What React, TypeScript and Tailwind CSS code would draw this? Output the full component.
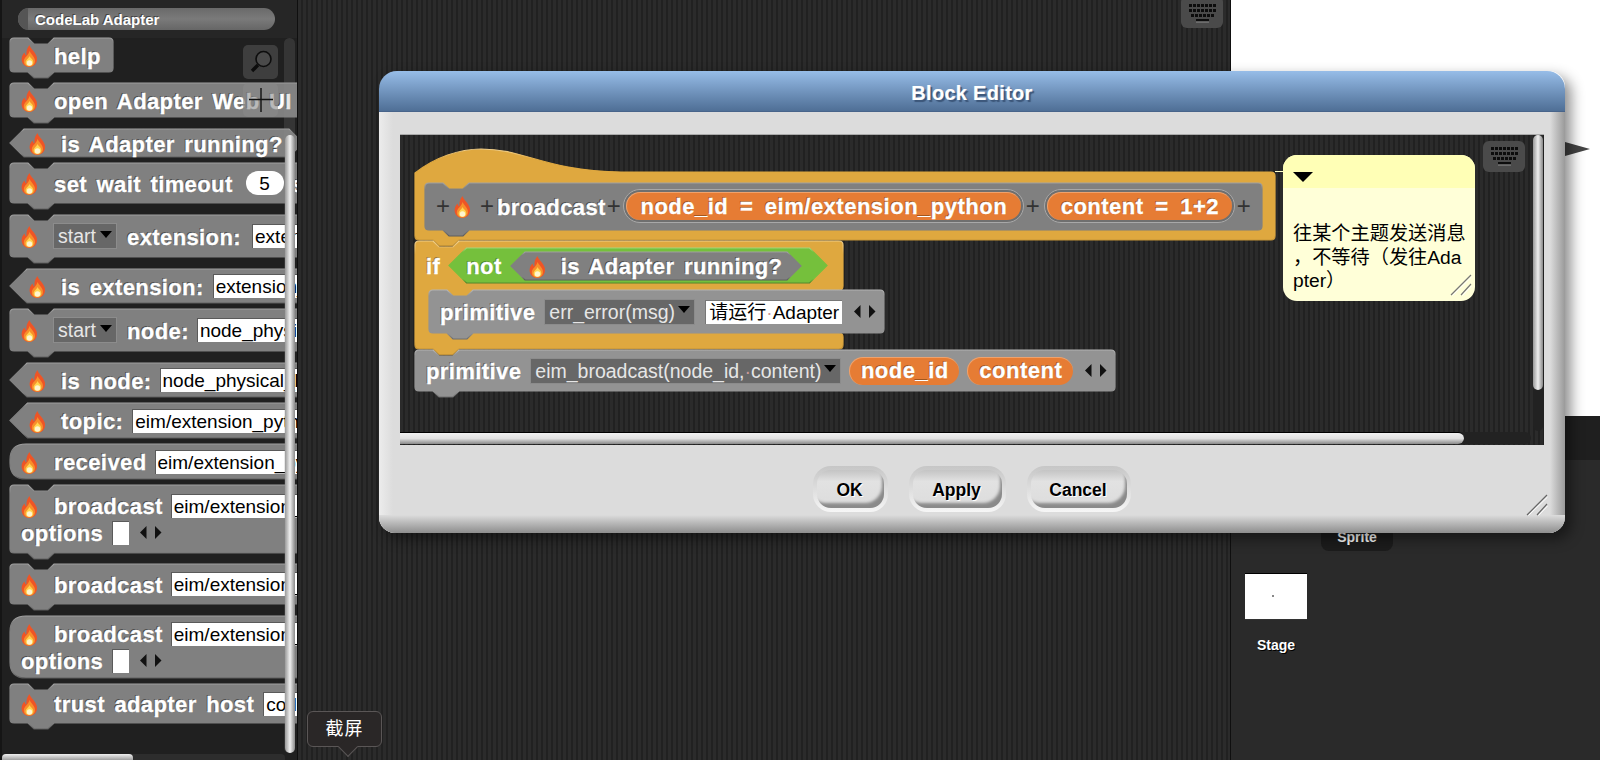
import React, { useId, useLayoutEffect, useRef, useState } from "react";

const LBL =
  "pt-[3px] font-bold text-white text-[22px] tracking-[0.4px] [word-spacing:3px] leading-none whitespace-nowrap [-webkit-text-stroke:0.3px_#fff] [text-shadow:-1px_-1px_0_#4a4a4a]";

type Kind = "cmd" | "pred" | "rep" | "hat" | "proto" | "cshape";

function shape(kind: Kind, w: number, h: number) {
  const r = 4;
  const top = `L18,0 L24,6 L38,6 L44,0 L${w - r},0 Q${w},0 ${w},${r}`;
  const bottom = `L${w},${h - r} Q${w},${h} ${w - r},${h} L44,${h} L38,${h + 6} L24,${h + 6} L18,${h} L${r},${h} Q0,${h} 0,${h - r} Z`;
  if (kind === "pred") {
    const a = h / 2;
    return `M0,${a} L${a},0 L${w - a},0 L${w},${a} L${w - a},${h} L${a},${h} Z`;
  }
  if (kind === "rep") {
    const q = Math.min(h / 2, 16);
    return `M${q},0 L${w - q},0 Q${w},0 ${w},${q} L${w},${h - q} Q${w},${h} ${w - q},${h} L${q},${h} Q0,${h} 0,${h - q} L0,${q} Q0,0 ${q},0 Z`;
  }
  if (kind === "hat") {
    return `M0,1 C20,-15 45,-23 66,-23 C110,-23 130,-1 206,0 L${w - r},0 Q${w},0 ${w},${r} ${bottom}`;
  }
  if (kind === "cshape") {
    return `M0,${r} Q0,0 ${r},0 ${top} L${w},45 Q${w},49 ${w - r},49 L58,49 L52,55 L38,55 L32,49 L18,49 Q14,49 14,53 L14,88 Q14,92 18,92 L${w - r},92 Q${w},92 ${w},96 ${bottom}`;
  }
  return `M0,${r} Q0,0 ${r},0 ${top} ${bottom}`;
}

function Block({
  kind = "cmd",
  fill = "#808080",
  hi = "#a2a2a2",
  lo = "#5c5c5c",
  className = "",
  children,
}: {
  kind?: Kind;
  fill?: string;
  hi?: string;
  lo?: string;
  className?: string;
  children?: React.ReactNode;
}) {
  const ref = useRef<HTMLDivElement>(null);
  const [size, setSize] = useState({ w: 0, h: 0 });
  const id = useId();
  useLayoutEffect(() => {
    if (ref.current) setSize({ w: ref.current.offsetWidth, h: ref.current.offsetHeight });
  }, []);
  return (
    <div ref={ref} className={`relative flex shrink-0 items-center ${className}`}>
      <svg className="absolute left-0 top-0 overflow-visible" width={size.w} height={size.h}>
        <defs>
          <linearGradient id={id} x1="0" y1="0" x2="0" y2="1">
            <stop offset="0" stopColor={hi} />
            <stop offset="0.12" stopColor={fill} />
            <stop offset="0.88" stopColor={fill} />
            <stop offset="1" stopColor={lo} />
          </linearGradient>
        </defs>
        {size.w > 0 && <path d={shape(kind, size.w, size.h)} fill={fill} stroke={`url(#${id})`} strokeWidth="1.2" />}
      </svg>
      <div className="relative flex w-full flex-col">{children}</div>
    </div>
  );
}

function Flame({ className = "" }: { className?: string }) {
  return (
    <svg viewBox="0 0 17 22" className={`mt-[2px] h-[22px] w-[17px] shrink-0 ${className}`}>
      <path
        d="M8.5 0C9.5 4 14 6.5 15.5 11C17.5 17 13.5 22 8.5 22C3.5 22 0 18 .7 13C1 10.5 2.5 8.5 3.5 7.5C3.8 9 4.5 10 5.5 10.5C5 6.5 6 3 8.5 0Z"
        fill="#ee5526"
      />
      <path d="M8.6 6C9.5 9 14 11.5 14 16C14 19.5 11.5 21.5 8.5 21.5C5 21.5 2.8 19.5 2.8 16.5C2.8 12.5 7.5 10.5 8.6 6Z" fill="#f98f2a" />
      <path d="M8.5 11C9.3 13 12.3 14.5 12.3 17.2C12.3 19.5 10.7 20.8 8.5 20.8C6.2 20.8 4.6 19.5 4.6 17.4C4.6 15 7.6 13.5 8.5 11Z" fill="#ffd552" />
      <ellipse cx="8.5" cy="18" rx="2.7" ry="2.8" fill="#fff5cf" />
    </svg>
  );
}

function Input({ className = "", children }: { className?: string; children?: React.ReactNode }) {
  return (
    <div
      className={`h-[24px] shrink-0 overflow-hidden whitespace-nowrap border-l border-t border-[#5a5a5a] bg-white pl-[2px] text-[19px] font-normal leading-[24px] text-black ${className}`}
    >
      {children}
    </div>
  );
}

function Drop({ className = "", children }: { className?: string; children?: React.ReactNode }) {
  return (
    <div
      className={`flex h-[26px] shrink-0 items-center justify-between whitespace-nowrap border border-[#8c8c8c] bg-[#676767] pl-[4px] pr-[4px] text-[19.5px] leading-none text-[#e6e6e6] ${className}`}
    >
      <span className="pt-[2px]">{children}</span>
      <span className="mb-[4px] h-0 w-0 border-x-[6px] border-t-[7px] border-x-transparent border-t-black" />
    </div>
  );
}

function Arrows({ className = "" }: { className?: string }) {
  return (
    <svg width="22" height="13" viewBox="0 0 22 13" className={`shrink-0 ${className}`}>
      <path d="M6.5 0V13L0 6.5Z" fill="#111" />
      <path d="M15 0V13L21.5 6.5Z" fill="#111" />
    </svg>
  );
}

function Plus({ className = "" }: { className?: string }) {
  return <span className={`shrink-0 text-[24px] font-normal leading-none text-[#333] ${className}`}>+</span>;
}

function Keyboard({ className = "" }: { className?: string }) {
  const keys: React.ReactNode[] = [];
  [0, 5, 10].forEach((y, row) => {
    for (let i = 0; i < (row === 2 ? 6 : 7); i++) {
      keys.push(<rect key={`${row}-${i}`} x={row === 2 ? 3 + i * 4 : 1 + i * 4} y={y} width="3" height="3" fill="#0c0c0c" />);
    }
  });
  return (
    <svg width="30" height="21" viewBox="0 0 30 21" className={className}>
      <g transform="translate(1,1)">{keys}</g>
      <rect x="9" y="16" width="13" height="2.5" fill="#0c0c0c" />
      <rect x="9" y="18.5" width="13" height="1" fill="#8d8d8d" />
    </svg>
  );
}

function Resize({ className = "", color = "#fff", dark = "#777" }: { className?: string; color?: string; dark?: string }) {
  return (
    <svg width="22" height="22" viewBox="0 0 22 22" className={className}>
      <path d="M1 21L21 1M11 21L21 10" stroke={dark} strokeWidth="1.2" />
      <path d="M2.5 21.5L21.5 3M12.5 21.5L21.5 12" stroke={color} strokeWidth="1" />
    </svg>
  );
}

function Palette() {
  const Cmd = ({ className, children }: { className: string; children: React.ReactNode }) => (
    <Block className={`pl-[11px] pr-[12px] ${className}`}>
      <div className="flex items-center">
        <Flame className="mr-[16px]" />
        {children}
      </div>
    </Block>
  );
  const Pred = ({ className, children }: { className: string; children: React.ReactNode }) => (
    <Block kind="pred" className={`pl-[19px] pr-[20px] ${className}`}>
      <div className="flex items-center">
        <Flame className="mr-[15px]" />
        {children}
      </div>
    </Block>
  );
  return (
    <aside className="relative h-full w-[297px] shrink-0 overflow-hidden border-l-2 border-[#151515] bg-[#202020]">
      <div className="flex h-[38px] items-start bg-[#262626] pl-[16px] pt-[8px]">
        <div className="flex h-[22px] w-[257px] overflow-hidden rounded-full bg-gradient-to-b from-[#6a6a6a] via-[#7a7a7a] to-[#666]">
          <div className="w-[10px] bg-[#555]" />
          <div className="pl-[7px] pt-[1px] text-[15px] font-bold leading-[22px] text-white [text-shadow:-1px_-1px_0_#444]">CodeLab Adapter</div>
        </div>
      </div>
      <div className="flex flex-col items-start pl-[8px]">
        <Cmd className="h-[34px]"><span className={LBL}>help</span></Cmd>
        <Cmd className="mt-[11px] h-[34px]"><span className={LBL}>open Adapter Web UI</span></Cmd>
        <Pred className="mt-[12px] h-[28px]"><span className={LBL}>is Adapter running?</span></Pred>
        <Cmd className="mt-[6px] h-[40px]">
          <span className={LBL}>set wait timeout</span>
          <div className="ml-[13px] h-[24px] w-[38px] shrink-0 rounded-full bg-white text-center text-[19px] leading-[26px] text-black">5</div>
          <span className={`${LBL} ml-[8px]`}>secs</span>
        </Cmd>
        <Cmd className="mt-[12px] h-[42px]">
          <Drop className="-ml-[1px] w-[64px]">start</Drop>
          <span className={`${LBL} ml-[10px]`}>extension:</span>
          <Input className="ml-[11px] w-[120px]">extension_python</Input>
        </Cmd>
        <Pred className="mt-[12px] h-[34px]">
          <span className={LBL}>is extension:</span>
          <Input className="ml-[9px] w-[120px]">extension_python</Input>
        </Pred>
        <Cmd className="mt-[6px] h-[42px]">
          <Drop className="-ml-[1px] w-[64px]">start</Drop>
          <span className={`${LBL} ml-[10px]`}>node:</span>
          <Input className="ml-[8px] w-[130px]">node_physical_blocks</Input>
        </Cmd>
        <Pred className="mt-[12px] h-[34px]">
          <span className={LBL}>is node:</span>
          <Input className="ml-[8px] w-[160px]">node_physical_blocks</Input>
        </Pred>
        <Pred className="mt-[6px] h-[35px]">
          <span className={LBL}>topic:</span>
          <Input className="ml-[9px] w-[190px]">eim/extension_python</Input>
        </Pred>
        <Block kind="rep" className="mt-[6px] h-[35px] pl-[11px] pr-[10px]">
          <div className="flex items-center">
            <Flame className="mr-[16px]" />
            <span className={LBL}>received</span>
            <Input className="ml-[8px] w-[190px]">eim/extension_python</Input>
          </div>
        </Block>
        <Block className="mt-[6px] h-[68px] pl-[11px] pr-[10px]">
          <div className="flex items-center">
            <Flame className="mr-[16px]" />
            <span className={LBL}>broadcast</span>
            <Input className="ml-[8px] w-[190px]">eim/extension_python</Input>
          </div>
          <div className="mt-[2px] flex items-center">
            <span className={LBL}>options</span>
            <div className="ml-[9px] h-[24px] w-[17px] border-l border-t border-[#5a5a5a] bg-white" />
            <Arrows className="ml-[11px]" />
          </div>
        </Block>
        <Cmd className="mt-[11px] h-[40px]">
          <span className={LBL}>broadcast</span>
          <Input className="ml-[8px] w-[190px]">eim/extension_python</Input>
        </Cmd>
        <Block kind="rep" className="mt-[12px] h-[62px] pl-[11px] pr-[10px]">
          <div className="flex items-center">
            <Flame className="mr-[16px]" />
            <span className={LBL}>broadcast</span>
            <Input className="ml-[8px] w-[190px]">eim/extension_python</Input>
          </div>
          <div className="mt-[2px] flex items-center">
            <span className={LBL}>options</span>
            <div className="ml-[9px] h-[24px] w-[17px] border-l border-t border-[#5a5a5a] bg-white" />
            <Arrows className="ml-[11px]" />
          </div>
        </Block>
        <Cmd className="mt-[6px] h-[39px]">
          <span className={LBL}>trust adapter host</span>
          <Input className="ml-[9px] w-[80px]">codelab</Input>
        </Cmd>
      </div>

      <div className="absolute left-[241px] top-[45px] flex h-[34px] w-[35px] items-center justify-center rounded-[5px] bg-[#3e3e3e]">
        <svg width="26" height="26" viewBox="0 0 26 26">
          <circle cx="15.5" cy="10" r="7.5" fill="#4a4a4a" stroke="#0d0d0d" strokeWidth="1.6" />
          <path d="M10 16L4 22" stroke="#0d0d0d" strokeWidth="3.4" />
        </svg>
      </div>
      <div className="absolute left-[241px] top-[83px] flex h-[34px] w-[35px] items-center justify-center rounded-[5px] bg-[#8a8a8a]/60">
        <svg width="26" height="26" viewBox="0 0 26 26">
          <path d="M13 1V25M1 12.5H25" stroke="#111" strokeWidth="1.4" />
        </svg>
      </div>
      <div className="absolute left-[282px] top-[38px] h-[715px] w-[11px] rounded-full bg-[#8a8a8a]/20" />
      <div className="absolute left-[283px] top-[135px] h-[618px] w-[10px] rounded-full bg-gradient-to-r from-[#9a9a9a] via-[#f0f0f0] to-[#8a8a8a]" />
      <div className="absolute bottom-0 left-0 h-[6px] w-[283px] rounded-t-[4px] bg-[#2d2d2d]" />
      <div className="absolute bottom-0 left-0 h-[6px] w-[131px] rounded-t-[4px] bg-gradient-to-b from-[#f0f0f0] to-[#a0a0a0]" />
    </aside>
  );
}

const Pill = ({ className = "", children }: { className?: string; children: React.ReactNode }) => (
  <div
    className={`flex h-[28px] shrink-0 items-center justify-center rounded-full border-l border-t border-[#f0a26c] bg-[#e67c34] text-[22px] font-bold leading-none tracking-[0.5px] text-white [-webkit-text-stroke:0.3px_#fff] [word-spacing:5px] [text-shadow:-1px_-1px_0_#a0561f] ${className}`}
  >
    {children}
  </div>
);

const RingPill = ({ className = "", children }: { className?: string; children: React.ReactNode }) => (
  <div className={`flex h-[34px] shrink-0 items-start rounded-full border border-[#a8a8a8] bg-[#6f6f6f] p-[2px] ${className}`}>
    <Pill className="h-[26px] w-full">{children}</Pill>
  </div>
);

function Canvas() {
  const GOLD = { fill: "#dfa83f", hi: "#f0cf8c", lo: "#a97f2e" };
  const GRAY2 = { fill: "#939393", hi: "#b5b5b5", lo: "#6c6c6c" };
  return (
    <div className="relative h-[310px] w-[1144px] shrink-0 overflow-hidden bg-[repeating-linear-gradient(90deg,#2b2b2b_0px,#2b2b2b_3px,#212121_3px,#212121_5px)]">
      <div className="absolute left-[15px] top-[37px] flex flex-col items-start">
        <Block kind="hat" {...GOLD} className="h-[68px] w-[860px] pl-[10px]">
          <Block className="h-[47px] w-[837px] pl-[11px]">
            <div className="flex items-center">
              <Plus />
              <Flame className="ml-[4px]" />
              <Plus className="ml-[9px]" />
              <span className={`${LBL} ml-[3px]`}>broadcast</span>
              <Plus className="ml-[1px]" />
              <RingPill className="ml-[2px] w-[401px]">node_id = eim/extension_python</RingPill>
              <Plus className="ml-[2px]" />
              <RingPill className="ml-[4px] w-[191px]">content = 1+2</RingPill>
              <Plus className="ml-[2px]" />
            </div>
          </Block>
        </Block>
        <Block kind="cshape" {...GOLD} className="mt-[1px] h-[108px] w-[428px] !items-start">
          <div className="flex h-[49px] items-center pl-[11px]">
            <span className={`${LBL} [text-shadow:-1px_-1px_0_#9c772c]`}>if</span>
            <Block kind="pred" fill="#75c03c" hi="#a3d87c" lo="#50852a" className="ml-[9px] h-[35px] w-[378px] pl-[17px]">
              <div className="flex items-center">
                <span className={`${LBL} [text-shadow:-1px_-1px_0_#4f8a26]`}>not</span>
                <Block kind="pred" className="ml-[9px] h-[28px] w-[290px] pl-[18px]">
                  <div className="flex items-center">
                    <Flame className="mr-[15px]" />
                    <span className={LBL}>is Adapter running?</span>
                  </div>
                </Block>
              </div>
            </Block>
          </div>
          <div className="pl-[14px]">
            <Block {...GRAY2} className="h-[43px] w-[455px] pl-[11px]">
              <div className="flex items-center">
                <span className={`${LBL} [text-shadow:-1px_-1px_0_#5a5a5a]`}>primitive</span>
                <Drop className="ml-[9px] w-[151px]">err_error(msg)</Drop>
                <Input className="ml-[10px] w-[137px] border-[#777] pl-[3px]">
                  请运行<span className="text-[#c99]">·</span>Adapter
                </Input>
                <Arrows className="ml-[12px]" />
              </div>
            </Block>
          </div>
        </Block>
        <Block {...GRAY2} className="mt-[1px] h-[41px] w-[700px] pl-[11px]">
          <div className="flex items-center">
            <span className={`${LBL} [text-shadow:-1px_-1px_0_#5a5a5a]`}>primitive</span>
            <Drop className="ml-[9px] w-[311px]">
              eim_broadcast(node_id,<span className="text-[#c99]">·</span>content)
            </Drop>
            <Pill className="ml-[8px] w-[110px]">node_id</Pill>
            <Pill className="ml-[8px] w-[106px]">content</Pill>
            <Arrows className="ml-[12px]" />
          </div>
        </Block>
      </div>

      <div className="absolute left-[875px] top-[36px] h-[1px] w-[8px] bg-[#ffffc8]" />
      <div className="absolute left-[883px] top-[20px] h-[146px] w-[192px] overflow-hidden rounded-[14px] bg-[#ffffd8]">
        <div className="h-[33px] bg-[#ffffb6] pl-[10px] pt-[17px]">
          <div className="h-0 w-0 border-x-[10px] border-t-[10px] border-x-transparent border-t-black" />
        </div>
        <div className="mt-[34px] pl-[10px] text-[19.2px] leading-[23.5px] text-black">
          <div className="whitespace-nowrap">往某个主题发送消息</div>
          <div className="whitespace-nowrap">，不等待（发往Ada</div>
          <div className="whitespace-nowrap">pter）</div>
        </div>
        <Resize className="absolute bottom-[5px] right-[3px]" color="#fff" dark="#777" />
      </div>

      <div className="absolute left-[1083px] top-[6px] flex h-[31px] w-[42px] items-center justify-center rounded-[6px] bg-[#4a4a4a]">
        <Keyboard />
      </div>
      <div className="absolute left-[1133px] top-0 h-[296px] w-[10px] rounded-full bg-[#222]" />
      <div className="absolute left-[1133px] top-0 h-[255px] w-[10px] rounded-full bg-gradient-to-r from-[#999] via-[#f0f0f0] to-[#888]" />
      <div className="absolute bottom-[1px] left-0 h-[12px] w-[1131px] rounded-full bg-[#222]" />
      <div className="absolute bottom-[1px] left-0 h-[12px] w-[1064px] rounded-r-full border-t border-black bg-gradient-to-b from-[#f0f0f0] via-[#e0e0e0] to-[#8a8a8a]" />
    </div>
  );
}

function DialogButton({ className = "", children }: { className?: string; children: React.ReactNode }) {
  return (
    <div className={`flex h-[46px] items-stretch rounded-[18px] bg-gradient-to-b from-[#c6c6c6] to-[#f6f6f6] p-[4px] ${className}`}>
      <div className="flex flex-1 items-center justify-center rounded-[14px] bg-gradient-to-b from-[#c4c4c4] via-[#e2e2e2] via-30% to-[#dcdcdc] pr-[2px] pt-[4px] text-[17.5px] font-bold leading-none text-black shadow-[inset_-5px_-8px_3px_-3px_#8a8a8a] [text-shadow:1px_1px_0_#fff]">
        {children}
      </div>
    </div>
  );
}

function Dialog() {
  return (
    <div className="absolute left-[379px] top-[71px] flex h-[462px] w-[1186px] flex-col rounded-[16px] shadow-[6px_6px_14px_rgba(0,0,0,0.45)]">
      <div className="flex h-[41px] shrink-0 items-center justify-center rounded-t-[18px] border-b border-[#48648a] bg-gradient-to-b from-[#97bde8] to-[#4f6f96] pt-[3px] text-[20px] font-bold tracking-[0.3px] text-white [-webkit-text-stroke:0.2px_#fff] [text-shadow:2px_2px_1px_#3b5578]">
        Block Editor
      </div>
      <div className="relative flex flex-1 flex-col items-center overflow-hidden rounded-b-[16px] bg-[#dcdcdc] pt-[22px]">
        <div className="absolute inset-y-0 left-0 w-[14px] bg-gradient-to-r from-[#ececec] to-[#dcdcdc]" />
        <div className="absolute inset-y-0 right-0 w-[15px] bg-gradient-to-r from-[#dcdcdc] to-[#9a9a9a]" />
        <div className="absolute inset-x-0 bottom-0 h-[18px] bg-gradient-to-b from-[#dcdcdc] to-[#8e8e8e]" />
        <div className="relative border-t border-[#aaa]">
          <Canvas />
        </div>
        <div className="relative mt-[21px] flex gap-[21px]">
          <DialogButton className="w-[75px]">OK</DialogButton>
          <DialogButton className="w-[97px]">Apply</DialogButton>
          <DialogButton className="w-[104px]">Cancel</DialogButton>
        </div>
        <Resize className="absolute bottom-[17px] right-[17px]" color="#fff" dark="#666" />
      </div>
    </div>
  );
}

export default function App() {
  return (
    <div className="relative flex h-[760px] w-[1600px] overflow-hidden bg-[#222] [font-family:'Liberation_Sans','Noto_Sans_CJK_SC',sans-serif]">
      <Palette />
      <main className="relative h-full flex-1 border-l border-r border-[#0f0f0f] bg-[repeating-linear-gradient(90deg,#2b2b2b_0px,#2b2b2b_3px,#212121_3px,#212121_5px)]">
        <div className="absolute right-[7px] top-[-4px] flex h-[32px] w-[42px] items-center justify-center rounded-[6px] bg-[#4a4a4a]">
          <Keyboard className="mt-[2px]" />
        </div>
        <div className="absolute bottom-[13px] left-[9px] flex h-[36px] w-[75px] items-center justify-center rounded-[6px] border border-[#5a5656] bg-[#2a2727] text-[18px] tracking-[1px] text-white">
          <span className="absolute -bottom-[8px] left-[33px] h-[14px] w-[14px] rotate-45 border-b border-r border-[#5a5656] bg-[#2a2727]" />
          <span className="relative">截屏</span>
        </div>
      </main>
      <section className="flex h-full w-[369px] shrink-0 flex-col bg-[#2a2a2a]">
        <div className="relative h-[416px] shrink-0 bg-white">
          <svg width="26" height="14" viewBox="0 0 26 14" className="absolute left-[334px] top-[142px]">
            <path d="M0 0L25 7L0 14Z" fill="#444" />
          </svg>
        </div>
        <div className="h-[44px] shrink-0 bg-[#1f1f1f]" />
        <div className="ml-[90px] flex h-[91px] w-[72px] shrink-0 items-end justify-center rounded-b-[8px] bg-[#1c1c1c] pb-[3px] text-[14px] font-bold text-white">
          Sprite
        </div>
        <div className="relative ml-[14px] mt-[22px] h-[47px] w-[62px] border-y border-b-[#333] border-t-black bg-white">
          <span className="absolute left-[27px] top-[21px] h-[2px] w-[2px] bg-[#888]" />
        </div>
        <div className="ml-[14px] mt-[18px] w-[62px] text-center text-[14px] font-bold leading-none text-white [text-shadow:1px_1px_0_#000]">Stage</div>
      </section>
      <Dialog />
    </div>
  );
}
